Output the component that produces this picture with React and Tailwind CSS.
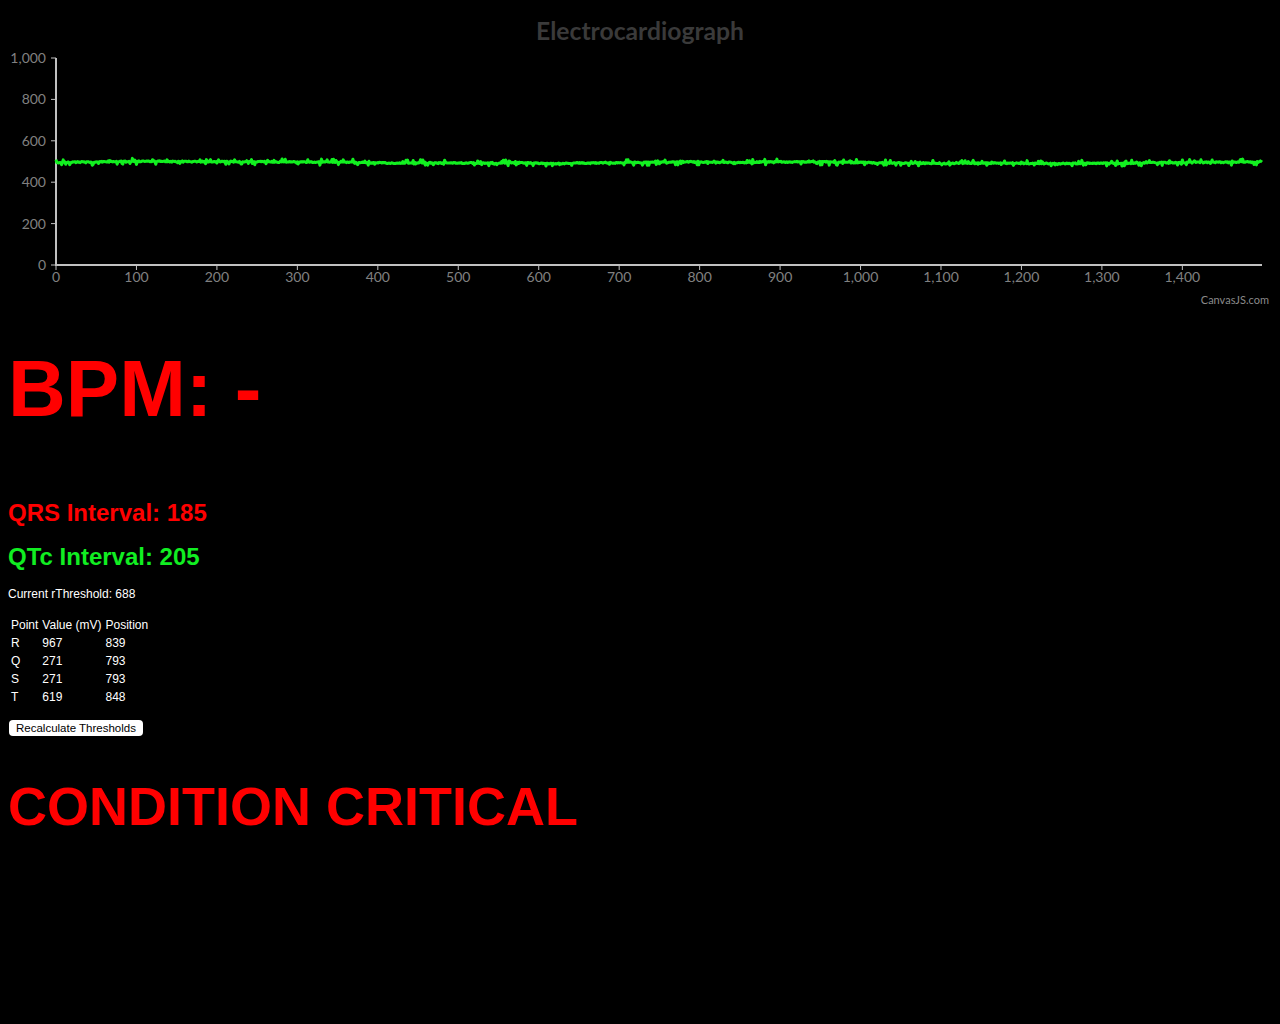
import React from 'react';

// deterministic noise so the trace looks the same every render
const rng = (seed) => () => {
  seed |= 0;
  seed = (seed + 0x6d2b79f5) | 0;
  let t = Math.imul(seed ^ (seed >>> 15), 1 | seed);
  t = (t + Math.imul(t ^ (t >>> 7), 61 | t)) ^ t;
  return ((t ^ (t >>> 14)) >>> 0) / 4294967296;
};

const X0 = 56;
const XS = 1206 / 1499;
const Y0 = 265;
const YS = 207 / 1000;

const buildTrace = () => {
  const r = rng(7);
  const pts = [];
  let drift = 0;
  for (let i = 0; i < 1500; i++) {
    drift += (r() - 0.5) * 0.8;
    drift *= 0.99;
    let v = 495 + drift + Math.sin(i / 110) * 3;
    if (r() < 0.2) v += (r() - 0.5) * 30;
    else v += (r() - 0.5) * 5;
    pts.push(`${(X0 + i * XS).toFixed(1)},${(Y0 - v * YS).toFixed(1)}`);
  }
  return pts.join(' ');
};

const trace = buildTrace();

const EcgChart = () => {
  const yTicks = [0, 200, 400, 600, 800, 1000];
  const xTicks = [0, 100, 200, 300, 400, 500, 600, 700, 800, 900, 1000, 1100, 1200, 1300, 1400];
  const fmt = (n) => n.toLocaleString('en-US');

  return (
    <svg width="1280" height="310" className="block" style={{ fontFamily: 'Lato, "Open Sans", sans-serif' }}>
      <text x="640" y="40" textAnchor="middle" fill="#3a3a3a" fontSize="24" fontWeight="700" textLength="208" lengthAdjust="spacingAndGlyphs">
        Electrocardiograph
      </text>

      {yTicks.map((t) => {
        const y = Y0 - t * YS;
        return (
          <g key={t}>
            <line x1="51" x2="56" y1={y} y2={y} stroke="#c0c0c0" strokeWidth="1" />
            <text x="46" y={y + 5} textAnchor="end" fill="#808080" fontSize="14">{fmt(t)}</text>
          </g>
        );
      })}

      {xTicks.map((t) => {
        const x = X0 + t * XS;
        return (
          <g key={t}>
            <line x1={x} x2={x} y1="265" y2="270" stroke="#c0c0c0" strokeWidth="1" />
            <text x={x} y="282" textAnchor="middle" fill="#808080" fontSize="14">{fmt(t)}</text>
          </g>
        );
      })}

      <line x1="56" x2="56" y1="58" y2="266" stroke="#c0c0c0" strokeWidth="2" />
      <line x1="55" x2="1262" y1="265" y2="265" stroke="#c0c0c0" strokeWidth="2" />

      <polyline points={trace} fill="none" stroke="#12f020" strokeWidth="3" strokeLinejoin="round" />

      <text x="1269" y="304" textAnchor="end" fill="#8a8a8a" fontSize="11">CanvasJS.com</text>
    </svg>
  );
};

const points = [
  { p: 'R', v: 967, pos: 839 },
  { p: 'Q', v: 271, pos: 793 },
  { p: 'S', v: 271, pos: 793 },
  { p: 'T', v: 619, pos: 848 },
];

export default function App() {
  return (
    <div className="min-h-[1024px] bg-black font-['Liberation_Sans',Arial,sans-serif] text-white">
      <EcgChart />

      <div className="px-2">
        <h1 className="mt-[33px] text-[80px] leading-[1.15] font-bold text-[#ff0000]">BPM: -</h1>

        <h2 className="mt-[64px] text-[24px] leading-[1.15] font-bold text-[#ff0000]">QRS Interval: 185</h2>
        <h2 className="mt-[16px] text-[24px] leading-[1.15] font-bold text-[#11ee22]">QTc Interval: 205</h2>

        <p className="mt-[18px] text-[12px] leading-[1.15]">Current rThreshold: 688</p>

        <table className="mt-[13px] border-separate border-spacing-[2px] text-[12px] leading-[14px]">
          <thead>
            <tr>
              <td className="p-px">Point</td>
              <td className="p-px">Value (mV)</td>
              <td className="p-px">Position</td>
            </tr>
          </thead>
          <tbody>
            {points.map((row) => (
              <tr key={row.p}>
                <td className="p-px">{row.p}</td>
                <td className="p-px">{row.v}</td>
                <td className="p-px">{row.pos}</td>
              </tr>
            ))}
          </tbody>
        </table>

        <button className="mt-[13px] ml-px h-[16px] rounded-[4px] bg-white px-[7px] text-[11.5px] leading-[16px] text-black">
          Recalculate Thresholds
        </button>

        <h1 className="mt-[36px] text-[54px] leading-[1.15] font-bold text-[#ff0000]">CONDITION CRITICAL</h1>
      </div>
    </div>
  );
}
